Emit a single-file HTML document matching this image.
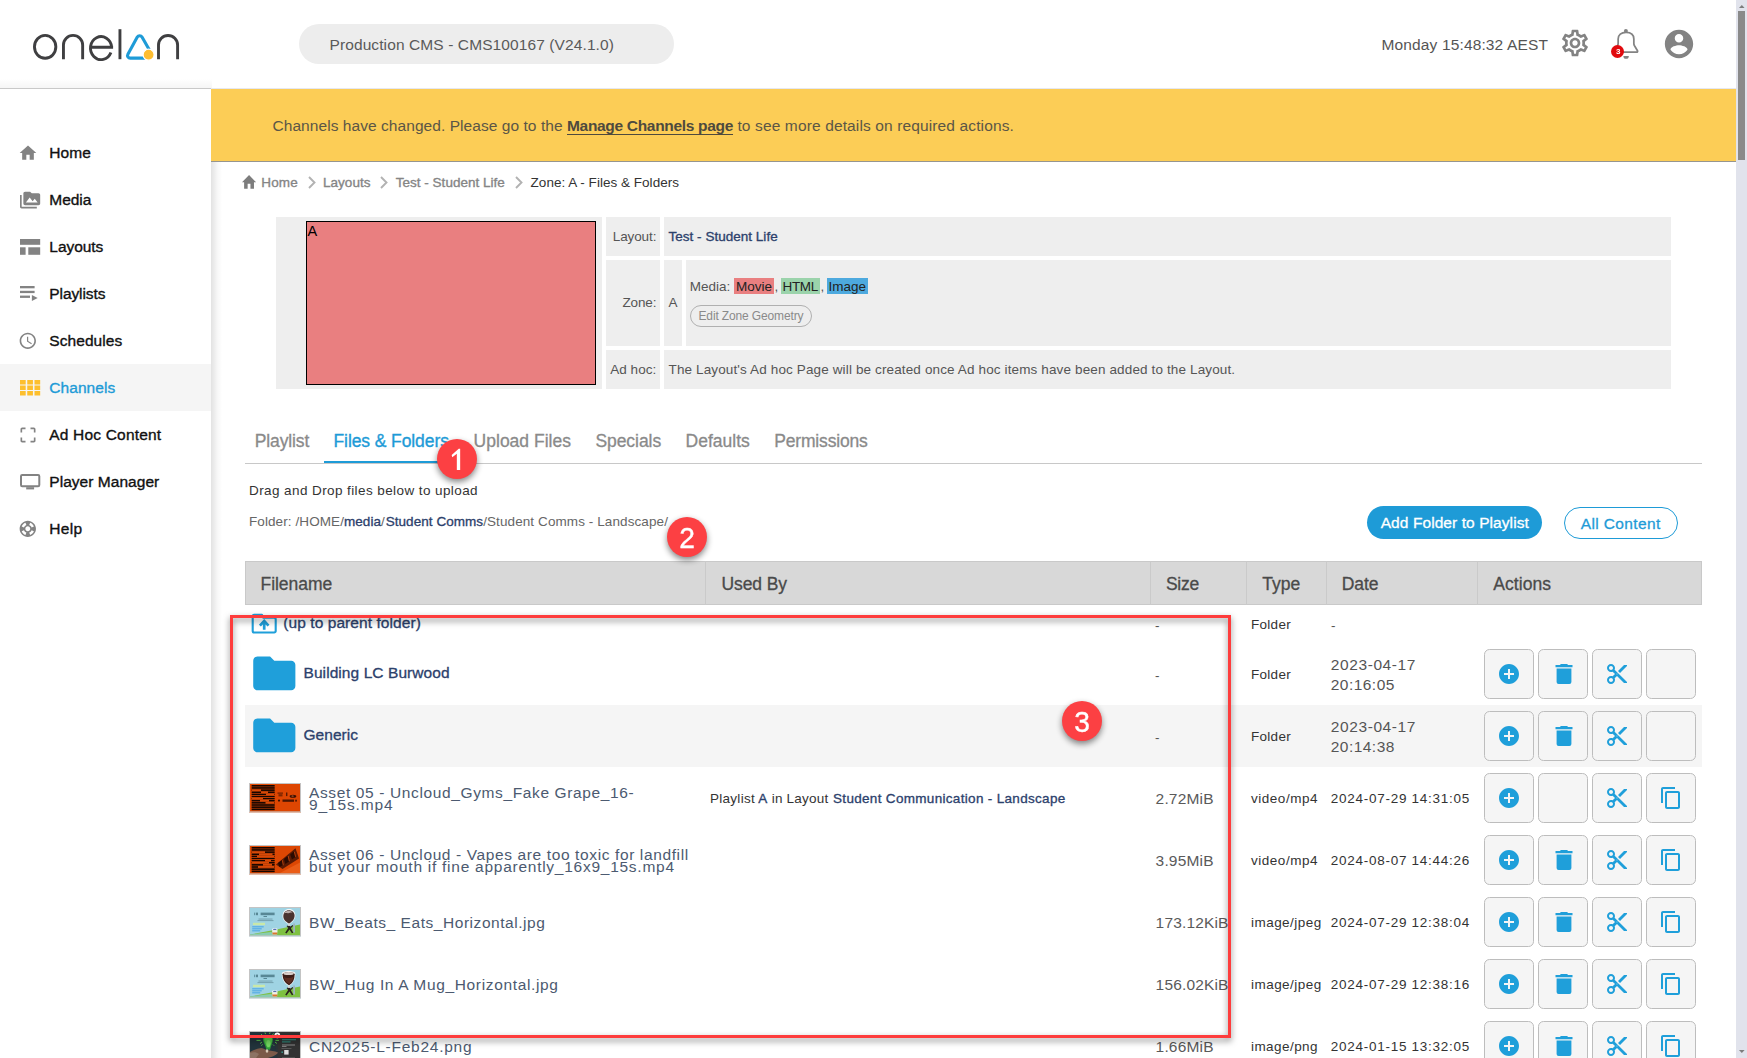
<!DOCTYPE html>
<html><head><meta charset="utf-8"><title>Zone A - Files &amp; Folders</title>
<style>

html,body{margin:0;padding:0;}
body{width:1747px;height:1058px;overflow:hidden;position:relative;background:#fff;font-family:"Liberation Sans",sans-serif;}
.t{position:absolute;white-space:nowrap;line-height:1;}
.b{position:absolute;box-sizing:border-box;}
.nv{color:#3b4a63;font-weight:700;}
svg{position:absolute;display:block;overflow:visible;}
.ab{position:absolute;box-sizing:border-box;width:50px;height:50px;background:#f5f5f5;border:1px solid #bdbdbd;border-radius:5.5px;}

</style></head><body>
<div class="b" style="left:211px;top:89px;width:1525px;height:73px;background:#fccd56;border-bottom:1px solid #96958f;"></div>
<div class="b" style="left:276px;top:217px;width:326px;height:172px;background:#eeeeee;"></div>
<div class="b" style="left:306px;top:221px;width:290px;height:164px;background:#e97f80;border:1px solid #000;"></div>
<div class="b" style="left:606px;top:217px;width:54px;height:39px;background:#eeeeee;"></div>
<div class="b" style="left:664px;top:217px;width:1007px;height:39px;background:#eeeeee;"></div>
<div class="b" style="left:606px;top:260px;width:54px;height:86px;background:#eeeeee;"></div>
<div class="b" style="left:664px;top:260px;width:18px;height:86px;background:#eeeeee;"></div>
<div class="b" style="left:686px;top:260px;width:985px;height:86px;background:#eeeeee;"></div>
<div class="b" style="left:606px;top:350px;width:54px;height:39px;background:#eeeeee;"></div>
<div class="b" style="left:664px;top:350px;width:1007px;height:39px;background:#eeeeee;"></div>
<div class="b" style="left:734px;top:278px;width:40px;height:16px;background:#e97f80;"></div>
<div class="b" style="left:781px;top:278px;width:39px;height:16px;background:#9bd3ab;"></div>
<div class="b" style="left:827px;top:278px;width:41px;height:16px;background:#4da9de;"></div>
<div class="b" style="left:690px;top:305px;width:122px;height:22px;border:1px solid #b0b0b0;border-radius:11px;"></div>
<div class="b" style="left:245px;top:463px;width:1457px;height:1px;background:#c8c8c8;"></div>
<div class="b" style="left:324px;top:461px;width:132px;height:2.3px;background:#1e9bd7;"></div>
<div class="b" style="left:1367px;top:506px;width:175px;height:33px;background:#1e9bd7;border-radius:17px;"></div>
<div class="b" style="left:1564px;top:507px;width:114px;height:32px;background:#fff;border:1px solid #1e9bd7;border-radius:16px;"></div>
<div class="b" style="left:245px;top:561px;width:1457px;height:44px;background:#d8d8d8;border:1px solid #c9c9c9;"></div>
<div class="b" style="left:705.3px;top:561px;width:1px;height:44px;background:#cacaca;"></div>
<div class="b" style="left:1150px;top:561px;width:1px;height:44px;background:#cacaca;"></div>
<div class="b" style="left:1246px;top:561px;width:1px;height:44px;background:#cacaca;"></div>
<div class="b" style="left:1326px;top:561px;width:1px;height:44px;background:#cacaca;"></div>
<div class="b" style="left:1477px;top:561px;width:1px;height:44px;background:#cacaca;"></div>
<div class="b" style="left:245px;top:705px;width:1457px;height:62px;background:#f5f5f5;"></div>
<div class="b" style="left:0px;top:0px;width:1736px;height:88px;background:#fff;"></div>
<div class="b" style="left:0px;top:79px;width:212px;height:9px;background:linear-gradient(to bottom,rgba(0,0,0,0),rgba(0,0,0,.04));"></div>
<div class="b" style="left:0px;top:88px;width:211px;height:1px;background:#c9c9c9;"></div>
<div class="b" style="left:211px;top:88px;width:1525px;height:1px;background:#e6e8f0;"></div>
<div class="b" style="left:299px;top:24px;width:375px;height:40px;background:#ededed;border-radius:20px;"></div>
<div class="b" style="left:0px;top:89px;width:211px;height:969px;background:#fff;"></div>
<div class="b" style="left:211px;top:162px;width:11px;height:896px;background:linear-gradient(to right,rgba(0,0,0,.115),rgba(0,0,0,.03) 60%,rgba(0,0,0,0));"></div>
<div class="b" style="left:0px;top:364px;width:211px;height:47px;background:#f5f5f5;"></div>
<div class="b" style="left:1736px;top:0px;width:11px;height:1058px;background:#e1e3ec;"></div>
<div class="b" style="left:1738px;top:11px;width:7px;height:149px;background:#8a8a8a;"></div>
<svg style="left:1738.7px;top:5.3px" width="5.6" height="3" viewBox="0 0 5.6 3"><path fill="#7d7d7d" d="M2.8 0L5.6 3H0z"/></svg>
<svg style="left:1738.7px;top:1050px" width="5.6" height="3" viewBox="0 0 5.6 3"><path fill="#7d7d7d" d="M2.8 3L5.600 0H0z"/></svg>
<svg style="left:18.07px;top:142.6px" width="20" height="20" viewBox="0 0 24 24" ><path fill="#838383" d="M10 20v-6h4v6h5v-8h3L12 3 2 12h3v8z"/></svg>
<svg style="left:19.75px;top:189.7px" width="20.2" height="20.2" viewBox="0 0 24 24" ><path fill="#838383" d="M2 6H0v5h.01L0 20c0 1.1.9 2 2 2h18v-2H2V6zm20-2h-8l-2-2H6c-1.1 0-1.99.9-1.99 2L4 16c0 1.1.9 2 2 2h16c1.1 0 2-.9 2-2V6c0-1.1-.9-2-2-2zM7 15l4.5-6 3.5 4.51 2.5-3.01L21 15H7z"/></svg>
<svg style="left:19.75px;top:238.9px" width="20.2" height="15.8" viewBox="0 0 20.2 15.8"><rect x="0" y="0" width="20.2" height="5.8" fill="#838383"/><rect x="0" y="8.3" width="5.6" height="7.5" fill="#838383"/><rect x="8.3" y="8.3" width="11.9" height="7.5" fill="#838383"/></svg>
<svg style="left:19.75px;top:285.7px" width="18" height="15" viewBox="0 0 18 15"><rect x="0" y="0" width="14.6" height="2.3" fill="#838383"/><rect x="0" y="4.8" width="14.6" height="2.3" fill="#838383"/><rect x="0" y="9.6" width="10" height="2.3" fill="#838383"/><path d="M11.9 8.9L17.7 11.9L11.9 14.9z" fill="#838383"/></svg>
<svg style="left:18.4px;top:330.8px" width="19.6" height="19.6" viewBox="0 0 24 24" ><path fill="#838383" d="M11.99 2C6.47 2 2 6.48 2 12s4.47 10 9.99 10C17.52 22 22 17.52 22 12S17.52 2 11.99 2zM12 20c-4.42 0-8-3.58-8-8s3.58-8 8-8 8 3.58 8 8-3.58 8-8 8zm.5-13H11v6l5.25 3.15.75-1.23-4.5-2.67z"/></svg>
<svg style="left:19.97px;top:380.1px" width="20.2" height="15.5" viewBox="0 0 20.2 15.5"><rect x="0.0" y="0.0" width="5.7" height="4.5" fill="#fdbf2d"/><rect x="7.25" y="0.0" width="5.7" height="4.5" fill="#fdbf2d"/><rect x="14.5" y="0.0" width="5.7" height="4.5" fill="#fdbf2d"/><rect x="0.0" y="5.5" width="5.7" height="4.5" fill="#fdbf2d"/><rect x="7.25" y="5.5" width="5.7" height="4.5" fill="#fdbf2d"/><rect x="14.5" y="5.5" width="5.7" height="4.5" fill="#fdbf2d"/><rect x="0.0" y="11.0" width="5.7" height="4.5" fill="#fdbf2d"/><rect x="7.25" y="11.0" width="5.7" height="4.5" fill="#fdbf2d"/><rect x="14.5" y="11.0" width="5.7" height="4.5" fill="#fdbf2d"/></svg>
<svg style="left:17.9px;top:425.1px" width="20" height="20" viewBox="0 0 24 24" ><path fill="#838383" d="M3 5v4h2V5h4V3H5c-1.1 0-2 .9-2 2zm2 10H3v4c0 1.1.9 2 2 2h4v-2H5v-4zm14 4h-4v2h4c1.1 0 2-.9 2-2v-4h-2v4zm0-16h-4v2h4v4h2V5c0-1.1-.9-2-2-2z"/></svg>
<svg style="left:19.97px;top:474.3px" width="20.3" height="15.5" viewBox="0 0 20.3 15.5"><rect x="1" y="1" width="18.3" height="11.2" rx="1.2" fill="none" stroke="#838383" stroke-width="2"/><rect x="6.2" y="13.2" width="7.9" height="2.2" fill="#838383"/></svg>
<svg style="left:18.1px;top:518.9px" width="19.6" height="19.6" viewBox="0 0 24 24" ><path fill="#838383" d="M12 2C6.48 2 2 6.48 2 12s4.48 10 10 10 10-4.48 10-10S17.52 2 12 2zm7.46 7.12l-2.78 1.15c-.51-1.36-1.58-2.44-2.95-2.94l1.15-2.78c2.1.8 3.77 2.47 4.58 4.57zM12 15c-1.66 0-3-1.34-3-3s1.34-3 3-3 3 1.34 3 3-1.34 3-3 3zM9.13 4.54l1.17 2.78c-1.38.5-2.47 1.59-2.98 2.97L4.54 9.13c.81-2.11 2.48-3.78 4.59-4.59zM4.54 14.87l2.78-1.15c.51 1.38 1.59 2.46 2.97 2.96l-1.17 2.78c-2.1-.81-3.77-2.48-4.58-4.59zm10.34 4.59l-1.15-2.78c1.37-.51 2.45-1.59 2.95-2.97l2.78 1.17c-.81 2.1-2.48 3.77-4.58 4.58z"/></svg>
<svg style="left:1559.05px;top:26.8px" width="32" height="32" viewBox="0 0 24 24" ><path fill="#838383" d="M19.43 12.98c.04-.32.07-.64.07-.98 0-.34-.03-.66-.07-.98l2.11-1.65c.19-.15.24-.42.12-.64l-2-3.46c-.09-.16-.26-.25-.44-.25-.06 0-.12.01-.17.03l-2.49 1c-.52-.4-1.08-.73-1.69-.98l-.38-2.65C14.46 2.18 14.25 2 14 2h-4c-.25 0-.46.18-.49.42l-.38 2.65c-.61.25-1.17.59-1.69.98l-2.49-1c-.06-.02-.12-.03-.18-.03-.17 0-.34.09-.43.25l-2 3.46c-.13.22-.07.49.12.64l2.11 1.65c-.04.32-.07.65-.07.98 0 .33.03.66.07.98l-2.11 1.65c-.19.15-.24.42-.12.64l2 3.46c.09.16.26.25.44.25.06 0 .12-.01.17-.03l2.49-1c.52.4 1.08.73 1.69.98l.38 2.65c.03.24.24.42.49.42h4c.25 0 .46-.18.49-.42l.38-2.65c.61-.25 1.17-.59 1.69-.98l2.49 1c.06.02.12.03.18.03.17 0 .34-.09.43-.25l2-3.46c.12-.22.07-.49-.12-.64l-2.11-1.65zm-1.98-1.71c.04.31.05.52.05.73 0 .21-.02.43-.05.73l-.14 1.13.89.7 1.08.84-.7 1.21-1.27-.51-1.04-.42-.9.68c-.43.32-.84.56-1.25.73l-1.06.43-.16 1.13-.2 1.35h-1.4l-.19-1.35-.16-1.13-1.06-.43c-.43-.18-.83-.41-1.23-.71l-.91-.7-1.06.43-1.27.51-.7-1.21 1.08-.84.89-.7-.14-1.13c-.03-.31-.05-.54-.05-.74s.02-.43.05-.73l.14-1.13-.89-.7-1.08-.84.7-1.21 1.27.51 1.04.42.9-.68c.43-.32.84-.56 1.25-.73l1.06-.43.16-1.13.2-1.35h1.39l.19 1.35.16 1.13 1.06.43c.43.18.83.41 1.23.71l.91.7 1.06-.43 1.27-.51.7 1.21-1.07.85-.89.7.14 1.13zM12 8c-2.21 0-4 1.79-4 4s1.79 4 4 4 4-1.79 4-4-1.79-4-4-4zm0 6c-1.1 0-2-.9-2-2s.9-2 2-2 2 .9 2 2-.9 2-2 2z"/></svg>
<svg style="left:1662.1px;top:26.5px" width="34" height="34" viewBox="0 0 24 24" ><path fill="#838383" d="M12 2C6.48 2 2 6.48 2 12s4.48 10 10 10 10-4.48 10-10S17.52 2 12 2zm0 3c1.66 0 3 1.34 3 3s-1.34 3-3 3-3-1.34-3-3 1.34-3 3-3zm0 14.2c-2.5 0-4.71-1.28-6-3.22.03-1.99 4-3.08 6-3.08 1.99 0 5.97 1.09 6 3.08-1.29 1.94-3.5 3.22-6 3.22z"/></svg>
<svg style="left:1600px;top:20px" width="50" height="44" viewBox="0 0 50 44"><path d="M18.15 19 C18.15 14.8 21.2 12.25 26 12.25 C30.8 12.25 33.85 14.8 33.85 19 V23.6 c0 .8 .15 1.2 .5 1.9 L37.5 30.7 a1 1 0 0 1 -.9 1.5 H15.4 a1 1 0 0 1 -.9 -1.5 L17.65 25.5 c.35 -.7 .5 -1.1 .5 -1.9 Z" fill="none" stroke="#838383" stroke-width="1.75" stroke-linejoin="round"/><circle cx="25.9" cy="11.1" r="2" fill="#838383"/><path d="M23.4 35.9 h5.4 a2.7 2.9 0 0 1 -5.4 0z" fill="#838383"/></svg>
<div class="b" style="left:1611.3px;top:45px;width:13.2px;height:13.2px;background:#e10a0e;border-radius:50%;"></div>
<svg style="left:241.7px;top:175.2px" width="14.1" height="13.7" viewBox="2 3 20 17" preserveAspectRatio="none"><path fill="#7d7d7d" d="M10 20v-6h4v6h5v-8h3L12 3 2 12h3v8z"/></svg>
<svg style="left:307.5px;top:176px" width="8" height="13" viewBox="0 0 8 13"><path d="M1 1l5.5 5.5L1 12" fill="none" stroke="#b2b2b2" stroke-width="1.9"/></svg>
<svg style="left:380px;top:176px" width="8" height="13" viewBox="0 0 8 13"><path d="M1 1l5.5 5.5L1 12" fill="none" stroke="#b2b2b2" stroke-width="1.9"/></svg>
<svg style="left:515px;top:176px" width="8" height="13" viewBox="0 0 8 13"><path d="M1 1l5.5 5.5L1 12" fill="none" stroke="#b2b2b2" stroke-width="1.9"/></svg>
<div class="ab" style="left:1484px;top:649px"></div>
<svg style="left:1497.1px;top:662px" width="24" height="24" viewBox="0 0 24 24" ><path fill="#1f9fda" d="M12 2C6.48 2 2 6.48 2 12s4.48 10 10 10 10-4.48 10-10S17.52 2 12 2zm5 11h-4v4h-2v-4H7v-2h4V7h2v4h4v2z"/></svg>
<div class="ab" style="left:1538px;top:649px"></div>
<svg style="left:1563.8px;top:674px" width="1" height="1" viewBox="0 0 1 1"><path d="M-3.6 -10h7.2v1.2h-7.2zM-8.5 -9h17v2.300h-17zM-7.400 -5.500h14.800v13.500a2 2 0 0 1 -2 2h-10.800a2 2 0 0 1 -2 -2z" fill="#1f9fda"/></svg>
<div class="ab" style="left:1592px;top:649px"></div>
<svg style="left:1605.1px;top:662px" width="24" height="24" viewBox="0 0 24 24" ><path fill="#1f9fda" d="M9.64 7.64c.23-.5.36-1.05.36-1.64 0-2.21-1.79-4-4-4S2 3.79 2 6s1.79 4 4 4c.59 0 1.14-.13 1.64-.36L10 12l-2.36 2.36C7.14 14.13 6.59 14 6 14c-2.21 0-4 1.79-4 4s1.79 4 4 4 4-1.79 4-4c0-.59-.13-1.14-.36-1.64L12 14l7 7h3v-1L9.64 7.64zM6 8c-1.1 0-2-.89-2-2s.9-2 2-2 2 .89 2 2-.9 2-2 2zm0 12c-1.1 0-2-.89-2-2s.9-2 2-2 2 .89 2 2-.9 2-2 2zm6-7.5c-.28 0-.5-.22-.5-.5s.22-.5.5-.5.5.22.5.5-.22.5-.5.5zM19 3l-6 6 2 2 7-7V3z"/></svg>
<div class="ab" style="left:1646px;top:649px"></div>
<div class="ab" style="left:1484px;top:711px"></div>
<svg style="left:1497.1px;top:724px" width="24" height="24" viewBox="0 0 24 24" ><path fill="#1f9fda" d="M12 2C6.48 2 2 6.48 2 12s4.48 10 10 10 10-4.48 10-10S17.52 2 12 2zm5 11h-4v4h-2v-4H7v-2h4V7h2v4h4v2z"/></svg>
<div class="ab" style="left:1538px;top:711px"></div>
<svg style="left:1563.8px;top:736px" width="1" height="1" viewBox="0 0 1 1"><path d="M-3.6 -10h7.2v1.2h-7.2zM-8.5 -9h17v2.300h-17zM-7.400 -5.500h14.800v13.500a2 2 0 0 1 -2 2h-10.800a2 2 0 0 1 -2 -2z" fill="#1f9fda"/></svg>
<div class="ab" style="left:1592px;top:711px"></div>
<svg style="left:1605.1px;top:724px" width="24" height="24" viewBox="0 0 24 24" ><path fill="#1f9fda" d="M9.64 7.64c.23-.5.36-1.05.36-1.64 0-2.21-1.79-4-4-4S2 3.79 2 6s1.79 4 4 4c.59 0 1.14-.13 1.64-.36L10 12l-2.36 2.36C7.14 14.13 6.59 14 6 14c-2.21 0-4 1.79-4 4s1.79 4 4 4 4-1.79 4-4c0-.59-.13-1.14-.36-1.64L12 14l7 7h3v-1L9.64 7.64zM6 8c-1.1 0-2-.89-2-2s.9-2 2-2 2 .89 2 2-.9 2-2 2zm0 12c-1.1 0-2-.89-2-2s.9-2 2-2 2 .89 2 2-.9 2-2 2zm6-7.5c-.28 0-.5-.22-.5-.5s.22-.5.5-.5.5.22.5.5-.22.5-.5.5zM19 3l-6 6 2 2 7-7V3z"/></svg>
<div class="ab" style="left:1646px;top:711px"></div>
<div class="ab" style="left:1484px;top:773px"></div>
<svg style="left:1497.1px;top:786px" width="24" height="24" viewBox="0 0 24 24" ><path fill="#1f9fda" d="M12 2C6.48 2 2 6.48 2 12s4.48 10 10 10 10-4.48 10-10S17.52 2 12 2zm5 11h-4v4h-2v-4H7v-2h4V7h2v4h4v2z"/></svg>
<div class="ab" style="left:1538px;top:773px"></div>
<div class="ab" style="left:1592px;top:773px"></div>
<svg style="left:1605.1px;top:786px" width="24" height="24" viewBox="0 0 24 24" ><path fill="#1f9fda" d="M9.64 7.64c.23-.5.36-1.05.36-1.64 0-2.21-1.79-4-4-4S2 3.79 2 6s1.79 4 4 4c.59 0 1.14-.13 1.64-.36L10 12l-2.36 2.36C7.14 14.13 6.59 14 6 14c-2.21 0-4 1.79-4 4s1.79 4 4 4 4-1.79 4-4c0-.59-.13-1.14-.36-1.64L12 14l7 7h3v-1L9.64 7.64zM6 8c-1.1 0-2-.89-2-2s.9-2 2-2 2 .89 2 2-.9 2-2 2zm0 12c-1.1 0-2-.89-2-2s.9-2 2-2 2 .89 2 2-.9 2-2 2zm6-7.5c-.28 0-.5-.22-.5-.5s.22-.5.5-.5.5.22.5.5-.22.5-.5.5zM19 3l-6 6 2 2 7-7V3z"/></svg>
<div class="ab" style="left:1646px;top:773px"></div>
<svg style="left:1659.1px;top:786px" width="24" height="24" viewBox="0 0 24 24" ><path fill="#1f9fda" d="M16 1H4c-1.1 0-2 .9-2 2v14h2V3h12V1zm3 4H8c-1.1 0-2 .9-2 2v14c0 1.1.9 2 2 2h11c1.1 0 2-.9 2-2V7c0-1.1-.9-2-2-2zm0 16H8V7h11v14z"/></svg>
<div class="ab" style="left:1484px;top:835px"></div>
<svg style="left:1497.1px;top:848px" width="24" height="24" viewBox="0 0 24 24" ><path fill="#1f9fda" d="M12 2C6.48 2 2 6.48 2 12s4.48 10 10 10 10-4.48 10-10S17.52 2 12 2zm5 11h-4v4h-2v-4H7v-2h4V7h2v4h4v2z"/></svg>
<div class="ab" style="left:1538px;top:835px"></div>
<svg style="left:1563.8px;top:860px" width="1" height="1" viewBox="0 0 1 1"><path d="M-3.6 -10h7.2v1.2h-7.2zM-8.5 -9h17v2.300h-17zM-7.400 -5.500h14.800v13.500a2 2 0 0 1 -2 2h-10.800a2 2 0 0 1 -2 -2z" fill="#1f9fda"/></svg>
<div class="ab" style="left:1592px;top:835px"></div>
<svg style="left:1605.1px;top:848px" width="24" height="24" viewBox="0 0 24 24" ><path fill="#1f9fda" d="M9.64 7.64c.23-.5.36-1.05.36-1.64 0-2.21-1.79-4-4-4S2 3.79 2 6s1.79 4 4 4c.59 0 1.14-.13 1.64-.36L10 12l-2.36 2.36C7.14 14.13 6.59 14 6 14c-2.21 0-4 1.79-4 4s1.79 4 4 4 4-1.79 4-4c0-.59-.13-1.14-.36-1.64L12 14l7 7h3v-1L9.64 7.64zM6 8c-1.1 0-2-.89-2-2s.9-2 2-2 2 .89 2 2-.9 2-2 2zm0 12c-1.1 0-2-.89-2-2s.9-2 2-2 2 .89 2 2-.9 2-2 2zm6-7.5c-.28 0-.5-.22-.5-.5s.22-.5.5-.5.5.22.5.5-.22.5-.5.5zM19 3l-6 6 2 2 7-7V3z"/></svg>
<div class="ab" style="left:1646px;top:835px"></div>
<svg style="left:1659.1px;top:848px" width="24" height="24" viewBox="0 0 24 24" ><path fill="#1f9fda" d="M16 1H4c-1.1 0-2 .9-2 2v14h2V3h12V1zm3 4H8c-1.1 0-2 .9-2 2v14c0 1.1.9 2 2 2h11c1.1 0 2-.9 2-2V7c0-1.1-.9-2-2-2zm0 16H8V7h11v14z"/></svg>
<div class="ab" style="left:1484px;top:897px"></div>
<svg style="left:1497.1px;top:910px" width="24" height="24" viewBox="0 0 24 24" ><path fill="#1f9fda" d="M12 2C6.48 2 2 6.48 2 12s4.48 10 10 10 10-4.48 10-10S17.52 2 12 2zm5 11h-4v4h-2v-4H7v-2h4V7h2v4h4v2z"/></svg>
<div class="ab" style="left:1538px;top:897px"></div>
<svg style="left:1563.8px;top:922px" width="1" height="1" viewBox="0 0 1 1"><path d="M-3.6 -10h7.2v1.2h-7.2zM-8.5 -9h17v2.300h-17zM-7.400 -5.500h14.800v13.500a2 2 0 0 1 -2 2h-10.800a2 2 0 0 1 -2 -2z" fill="#1f9fda"/></svg>
<div class="ab" style="left:1592px;top:897px"></div>
<svg style="left:1605.1px;top:910px" width="24" height="24" viewBox="0 0 24 24" ><path fill="#1f9fda" d="M9.64 7.64c.23-.5.36-1.05.36-1.64 0-2.21-1.79-4-4-4S2 3.79 2 6s1.79 4 4 4c.59 0 1.14-.13 1.64-.36L10 12l-2.36 2.36C7.14 14.13 6.59 14 6 14c-2.21 0-4 1.79-4 4s1.79 4 4 4 4-1.79 4-4c0-.59-.13-1.14-.36-1.64L12 14l7 7h3v-1L9.64 7.64zM6 8c-1.1 0-2-.89-2-2s.9-2 2-2 2 .89 2 2-.9 2-2 2zm0 12c-1.1 0-2-.89-2-2s.9-2 2-2 2 .89 2 2-.9 2-2 2zm6-7.5c-.28 0-.5-.22-.5-.5s.22-.5.5-.5.5.22.5.5-.22.5-.5.5zM19 3l-6 6 2 2 7-7V3z"/></svg>
<div class="ab" style="left:1646px;top:897px"></div>
<svg style="left:1659.1px;top:910px" width="24" height="24" viewBox="0 0 24 24" ><path fill="#1f9fda" d="M16 1H4c-1.1 0-2 .9-2 2v14h2V3h12V1zm3 4H8c-1.1 0-2 .9-2 2v14c0 1.1.9 2 2 2h11c1.1 0 2-.9 2-2V7c0-1.1-.9-2-2-2zm0 16H8V7h11v14z"/></svg>
<div class="ab" style="left:1484px;top:959px"></div>
<svg style="left:1497.1px;top:972px" width="24" height="24" viewBox="0 0 24 24" ><path fill="#1f9fda" d="M12 2C6.48 2 2 6.48 2 12s4.48 10 10 10 10-4.48 10-10S17.52 2 12 2zm5 11h-4v4h-2v-4H7v-2h4V7h2v4h4v2z"/></svg>
<div class="ab" style="left:1538px;top:959px"></div>
<svg style="left:1563.8px;top:984px" width="1" height="1" viewBox="0 0 1 1"><path d="M-3.6 -10h7.2v1.2h-7.2zM-8.5 -9h17v2.300h-17zM-7.400 -5.500h14.800v13.500a2 2 0 0 1 -2 2h-10.800a2 2 0 0 1 -2 -2z" fill="#1f9fda"/></svg>
<div class="ab" style="left:1592px;top:959px"></div>
<svg style="left:1605.1px;top:972px" width="24" height="24" viewBox="0 0 24 24" ><path fill="#1f9fda" d="M9.64 7.64c.23-.5.36-1.05.36-1.64 0-2.21-1.79-4-4-4S2 3.79 2 6s1.79 4 4 4c.59 0 1.14-.13 1.64-.36L10 12l-2.36 2.36C7.14 14.13 6.59 14 6 14c-2.21 0-4 1.79-4 4s1.79 4 4 4 4-1.79 4-4c0-.59-.13-1.14-.36-1.64L12 14l7 7h3v-1L9.64 7.64zM6 8c-1.1 0-2-.89-2-2s.9-2 2-2 2 .89 2 2-.9 2-2 2zm0 12c-1.1 0-2-.89-2-2s.9-2 2-2 2 .89 2 2-.9 2-2 2zm6-7.5c-.28 0-.5-.22-.5-.5s.22-.5.5-.5.5.22.5.5-.22.5-.5.5zM19 3l-6 6 2 2 7-7V3z"/></svg>
<div class="ab" style="left:1646px;top:959px"></div>
<svg style="left:1659.1px;top:972px" width="24" height="24" viewBox="0 0 24 24" ><path fill="#1f9fda" d="M16 1H4c-1.1 0-2 .9-2 2v14h2V3h12V1zm3 4H8c-1.1 0-2 .9-2 2v14c0 1.1.9 2 2 2h11c1.1 0 2-.9 2-2V7c0-1.1-.9-2-2-2zm0 16H8V7h11v14z"/></svg>
<div class="ab" style="left:1484px;top:1021px"></div>
<svg style="left:1497.1px;top:1034px" width="24" height="24" viewBox="0 0 24 24" ><path fill="#1f9fda" d="M12 2C6.48 2 2 6.48 2 12s4.48 10 10 10 10-4.48 10-10S17.52 2 12 2zm5 11h-4v4h-2v-4H7v-2h4V7h2v4h4v2z"/></svg>
<div class="ab" style="left:1538px;top:1021px"></div>
<svg style="left:1563.8px;top:1046px" width="1" height="1" viewBox="0 0 1 1"><path d="M-3.6 -10h7.2v1.2h-7.2zM-8.5 -9h17v2.300h-17zM-7.400 -5.500h14.800v13.500a2 2 0 0 1 -2 2h-10.800a2 2 0 0 1 -2 -2z" fill="#1f9fda"/></svg>
<div class="ab" style="left:1592px;top:1021px"></div>
<svg style="left:1605.1px;top:1034px" width="24" height="24" viewBox="0 0 24 24" ><path fill="#1f9fda" d="M9.64 7.64c.23-.5.36-1.05.36-1.64 0-2.21-1.79-4-4-4S2 3.79 2 6s1.79 4 4 4c.59 0 1.14-.13 1.64-.36L10 12l-2.36 2.36C7.14 14.13 6.59 14 6 14c-2.21 0-4 1.79-4 4s1.79 4 4 4 4-1.79 4-4c0-.59-.13-1.14-.36-1.64L12 14l7 7h3v-1L9.64 7.64zM6 8c-1.1 0-2-.89-2-2s.9-2 2-2 2 .89 2 2-.9 2-2 2zm0 12c-1.1 0-2-.89-2-2s.9-2 2-2 2 .89 2 2-.9 2-2 2zm6-7.5c-.28 0-.5-.22-.5-.5s.22-.5.5-.5.5.22.5.5-.22.5-.5.5zM19 3l-6 6 2 2 7-7V3z"/></svg>
<div class="ab" style="left:1646px;top:1021px"></div>
<svg style="left:1659.1px;top:1034px" width="24" height="24" viewBox="0 0 24 24" ><path fill="#1f9fda" d="M16 1H4c-1.1 0-2 .9-2 2v14h2V3h12V1zm3 4H8c-1.1 0-2 .9-2 2v14c0 1.1.9 2 2 2h11c1.1 0 2-.9 2-2V7c0-1.1-.9-2-2-2zm0 16H8V7h11v14z"/></svg>
<svg style="left:248.6px;top:648.2px" width="50.6" height="50.6" viewBox="0 0 24 24" ><path fill="#1f9fda" d="M10 4H4c-1.1 0-1.99.9-1.99 2L2 18c0 1.1.9 2 2 2h16c1.1 0 2-.9 2-2V8c0-1.1-.9-2-2-2h-8l-2-2z"/></svg>
<svg style="left:248.6px;top:710.2px" width="50.6" height="50.6" viewBox="0 0 24 24" ><path fill="#1f9fda" d="M10 4H4c-1.1 0-1.99.9-1.99 2L2 18c0 1.1.9 2 2 2h16c1.1 0 2-.9 2-2V8c0-1.1-.9-2-2-2h-8l-2-2z"/></svg>
<svg style="left:250px;top:612px" width="28" height="23" viewBox="0 0 28 23"><path d="M4.2 20.55 h20 a1.5 1.5 0 0 0 1.5 -1.5 v-11.9 a1.5 1.5 0 0 0 -1.5 -1.5 h-11 l-1.3 -2.9 h-7.7 a1.5 1.5 0 0 0 -1.5 1.5 v14.8 a1.5 1.5 0 0 0 1.5 1.5z" fill="#fff" stroke="#1f9fda" stroke-width="2.1" stroke-linejoin="round"/><path d="M14.2 17.8v-8.6M9.9 13.6l4.3-4.6 4.3 4.6" fill="none" stroke="#1f9fda" stroke-width="2.7"/></svg>
<svg style="left:249.1px;top:783.2px" width="52" height="29.4" viewBox="0 0 52 29.4"><defs><pattern id="stp" width="52" height="2.13" patternUnits="userSpaceOnUse"><rect width="52" height="1.55" fill="#170600"/><rect y="1.55" width="52" height="0.58" fill="#c23c02"/></pattern></defs><rect width="52" height="29.4" fill="#e64b03"/><rect x="26" y="1" width="25" height="27.4" fill="#de4602"/><rect x="2.6" y="2" width="23.1" height="25.6" fill="url(#stp)"/><g fill="#d94a08"><rect x="3" y="6.2" width="9" height="1.9"/><rect x="12" y="8.3" width="7" height="1.9"/><rect x="17" y="10.4" width="8.3" height="1.9"/><rect x="3" y="14.7" width="11" height="1.9"/><rect x="11" y="16.8" width="9" height="1.9"/><rect x="16.5" y="18.9" width="8.8" height="1.9"/></g><g fill="#5a1a02"><rect x="28.5" y="9.6" width="5.5" height="1"/><rect x="29.5" y="11.2" width="4" height="2.2" opacity=".7"/><rect x="37" y="9.5" width="1.4" height="3.6"/><ellipse cx="44" cy="13.2" rx="3.3" ry="1.5" fill="#3a1002"/><ellipse cx="43.6" cy="13" rx="1.2" ry=".6" fill="#e2703a"/><circle cx="30" cy="17.6" r="1.1" fill="#3a1002"/><rect x="33.5" y="16.5" width="11.5" height="2.3" fill="#4a1502"/><rect x="46.3" y="16.7" width="1.5" height="1.9" fill="#3a1002"/></g><rect x="0.5" y="0.5" width="51" height="28.4" fill="none" stroke="#c4c4c4" stroke-width="1"/></svg>
<svg style="left:249.1px;top:845.2px" width="52" height="29.4" viewBox="0 0 52 29.4"><rect width="52" height="29.4" fill="#e64b03"/><path d="M26 1h25v27.4h-25z" fill="#dc4703"/><path d="M51 17.5v10.9H30z" fill="#ea5d17"/><path d="M27 19.5L46.5 3.2 50 13.5 33.5 24z" fill="#5a1a03"/><path d="M29 18l4-3 1 5-3.4 2zM35 14l3.6-3 1.4 5.6-3.6 2.4zM41.2 9.6l3.6-3 1.6 5.4-3.4 2.6z" fill="#2a0a01"/><path d="M33.3 15.2l1 5M39.2 11l1.2 5.2M45.4 6.8l1.2 5" stroke="#c8470c" stroke-width=".8"/><rect x="2.6" y="2" width="23.1" height="25.6" fill="url(#stp)"/><g fill="#d94a08"><rect x="3" y="6.2" width="13" height="1.9"/><rect x="10" y="8.3" width="13.5" height="1.9"/><rect x="8" y="10.4" width="17.3" height="1.9"/><rect x="16" y="14.7" width="6" height="1.9"/><rect x="3" y="16.8" width="17" height="1.9"/><rect x="14" y="18.9" width="9" height="1.9"/><rect x="9" y="21" width="16.3" height="1.9"/></g><rect x="0.5" y="0.5" width="51" height="28.4" fill="none" stroke="#c4c4c4" stroke-width="1"/></svg>
<svg style="left:249.1px;top:907.2px" width="52" height="29.4" viewBox="0 0 52 29.4"><rect width="52" height="29.4" fill="#9fd3e3"/><path d="M1 28.400V27.600L25 23 51 17.500v10.900z" fill="#7ec142"/><path d="M1 28.400v-1L22 25l8 3.400z" fill="#8fd0df" opacity=".7"/><g fill="#3d6b78" opacity=".72"><rect x="5.200" y="5.600" width="1" height="2.600"/><rect x="7" y="5.600" width="2" height="2.600"/><rect x="11.600" y="5.600" width="14" height="2.600"/><rect x="14.500" y="9" width="3.500" height="1" /></g><g fill="#6f9aa8"><rect x="9.500" y="11.600" width="14" height=".9"/><rect x="8.500" y="13.200" width="16" height=".9"/></g><rect x="4" y="15.800" width="12" height="2.300" fill="#c9e8a8"/><g fill="#62b3e6"><rect x="3.200" y="19" width="11.500" height="1.500"/><rect x="3.200" y="21" width="9.500" height="1.500"/><rect x="3.200" y="23" width="8" height="1.500"/></g><rect x="44.200" y="16.500" width="1.800" height="9" fill="#9fb4bd"/><path d="M33.5 9c0-4.5 3-7 6.6-7s6.3 2.600 6.300 6.500c0 4.200-3.600 7.200-6.300 8.800c-3.200-1.600-6.600-4.300-6.600-8.300z" fill="#f4f6f7"/><path d="M34.300 9.200c0-3.800 2.500-6 5.600-6s5.700 2.100 5.700 5.500c0 3.700-3 6.200-5.600 7.800c-2.800-1.500-5.700-3.800-5.700-7.300z" fill="#4a332f"/><path d="M35 6.500c1-2 3-3 5-2.800s3 1 3.500 2c-1.500-.5-3 .8-4.500.6s-2.500-.6-4 .2z" fill="#b9aaa6"/><path d="M39.500 17.200l1 0 .8 2.500 2.200-1.800 .7 .8-2.300 2.500 2.400 4.500-1.400 .6-2.400-3.800-3 4-1.300-.8 3-4.600-1.700-2.200 1.500-.400z" fill="#2b2420"/><circle cx="40" cy="18" r="1.100" fill="#f1f1f1"/><ellipse cx="25.800" cy="22.600" rx="2.900" ry="1.400" fill="#eef3f5"/><ellipse cx="25.800" cy="22.500" rx="1.800" ry=".8" fill="#5b6fb0"/><path d="M23 23.200h5.600l-.6 4.200h-4.400z" fill="#f0efe9"/><path d="M23.300 25.500h5l-.3 2h-4.400z" fill="#d9772e"/><rect x="0.5" y="0.5" width="51" height="28.4" fill="none" stroke="#c4c4c4" stroke-width="1"/></svg>
<svg style="left:249.1px;top:969.2px" width="52" height="29.4" viewBox="0 0 52 29.4"><rect width="52" height="29.4" fill="#9fd3e3"/><path d="M1 28.400V27.600L25 23 51 17.500v10.900z" fill="#7ec142"/><path d="M1 28.400v-1L22 25l8 3.400z" fill="#8fd0df" opacity=".7"/><g fill="#3d6b78" opacity=".72"><rect x="5.200" y="5.600" width="1" height="2.600"/><rect x="7" y="5.600" width="2" height="2.600"/><rect x="11.600" y="5.600" width="14" height="2.600"/><rect x="14.500" y="9" width="3.500" height="1" /></g><g fill="#6f9aa8"><rect x="9.500" y="11.600" width="14" height=".9"/><rect x="8.500" y="13.200" width="16" height=".9"/></g><rect x="4" y="15.800" width="12" height="2.300" fill="#c9e8a8"/><g fill="#62b3e6"><rect x="3.200" y="19" width="11.500" height="1.500"/><rect x="3.200" y="21" width="9.500" height="1.500"/><rect x="3.200" y="23" width="8" height="1.500"/></g><rect x="44.200" y="16.500" width="1.800" height="9" fill="#9fb4bd"/><path d="M32.800 4.500c0-1.600 3-2.600 7-2.600s6.600 1 6.600 2.600c0 5.500-1.600 9.800-6.400 12.500c-5-2.500-7.200-7-7.200-12.500z" fill="#f4f6f7"/><path d="M33.600 5.200c0-1 2.600-2 6.200-2s5.800.9 5.800 2c0 5-1.500 8.600-5.600 11c-4.300-2.200-6.400-6-6.400-11z" fill="#3b1d17"/><ellipse cx="39.600" cy="4.600" rx="5.200" ry="1.500" fill="#d8cdc8"/><path d="M35 8c2 1.500 7 1.500 9.500-.5c-.3 3-1.700 5.700-4.400 7.400c-3-1.600-4.600-4-5.100-6.900z" fill="#6a3326" opacity=".8"/><path d="M39.500 17.200l1 0 .8 2.500 2.200-1.800 .7 .8-2.300 2.500 2.400 4.500-1.400 .6-2.400-3.800-3 4-1.300-.8 3-4.600-1.700-2.200 1.500-.400z" fill="#2b2420"/><circle cx="40" cy="18" r="1.100" fill="#f1f1f1"/><ellipse cx="25.800" cy="22.600" rx="2.900" ry="1.400" fill="#eef3f5"/><ellipse cx="25.800" cy="22.500" rx="1.800" ry=".8" fill="#5b6fb0"/><path d="M23 23.200h5.600l-.6 4.200h-4.400z" fill="#f0efe9"/><path d="M23.300 25.500h5l-.3 2h-4.400z" fill="#d9772e"/><rect x="0.5" y="0.5" width="51" height="28.4" fill="none" stroke="#c4c4c4" stroke-width="1"/></svg>
<svg style="left:249.1px;top:1031px" width="52" height="29.4" viewBox="0 0 52 29.4"><rect width="52" height="29.4" fill="#323232"/><rect x="1" y="1" width="27" height="27.400" fill="#22343c"/><path d="M28 1c-2 8-2 19 0 27.400h1V1z" fill="#2b3236"/><path d="M14 8c0-2 2.200-3.600 5-3.600s5 1.600 5 3.800c0 3-2 6-3 10.500h-3.600C16.600 14 14 11.500 14 8z" fill="#2f9b3a"/><path d="M15.200 8.500c0-1.800 1.800-3 4-3s4 1.300 4 3c0 2.600-1.700 5-2.600 8h-2.400c-1-3-3-5.400-3-8z" fill="#54c747"/><ellipse cx="19.400" cy="12.500" rx="2" ry="3.500" fill="#7fe06a" opacity=".8"/><g stroke="#5fd14a" stroke-width=".9"><path d="M7.500 9.400h4M26.500 9.400h3.500M11 12.600l2-1.600M26 11l2 1.500M12 3l1.500 1.500M16 1.500l.6 1.600M21 1.400l-.4 1.600M24.500 2.500l-1 1.500M12.500 14.600l1-1.200M25 14.600l-1-1"/></g><path d="M1 21c3-2 7-3.500 11-4 2 0 4 1.500 6 2 3 1 8 1 11 2.500-1 2.500-6 4.500-10 5.500l-9 1.400H1z" fill="#7b5a49"/><path d="M1 22c3-1 6-1 9 1l-4 5.400H1z" fill="#9a8377" opacity=".6"/><ellipse cx="18" cy="20" rx="1.300" ry="1.800" fill="#d8cbb8"/><circle cx="28.300" cy="4.300" r="2.900" fill="#fff"/><circle cx="28.300" cy="4.300" r="1" fill="#555"/><g fill="#2e7f72"><rect x="33" y="8" width="14" height="1.300"/><rect x="33" y="10.200" width="8.500" height="1.300"/></g><g fill="#7d7d7d"><rect x="33" y="13.400" width="13" height="1.200"/><rect x="33" y="15" width="4.500" height="1"/><rect x="32.500" y="17" width="10" height=".7" fill="#666"/><rect x="33" y="26.600" width="13" height="1.200"/></g><rect x="32.400" y="20.600" width="1.600" height="1.100" fill="#3bb3a5"/><rect x="35.200" y="19" width="4.400" height="4.600" fill="#dcdcdc"/><rect x="0.5" y="0.5" width="51" height="28.4" fill="none" stroke="#c4c4c4" stroke-width="1"/></svg>
<svg style="left:0px;top:0px" width="200" height="80" viewBox="0 0 200 80">
<g fill="none" stroke="#3f3f41" stroke-width="2.9">
<ellipse cx="45.15" cy="46.8" rx="10.7" ry="11.45"/>
<path d="M63.45 59.2V45a9.6 9.6 0 0 1 19.2 0V59.2"/>
<path d="M90.6 47.3H113.1M111.65 47.3A10.6 11.45 0 1 0 110.9 52.4"/>
<path d="M119.95 29.2V59.2"/>
<path d="M158.5 59.2V45a9.55 9.55 0 0 1 19.1 0V59.2"/>
</g>
<path d="M144 58.15H130.3a2.7 2.7 0 0 1 -2.4 -4L137.3 37.1a2.7 2.7 0 0 1 4.7 0L149 49.2" fill="none" stroke="#1e9bd7" stroke-width="3.1" stroke-linecap="round" stroke-linejoin="round"/>
<circle cx="148.6" cy="54.7" r="5.5" fill="#fdbd31" stroke="#fff" stroke-width="1.2"/>
</svg>
<div class="t" id="t0" style="left:329.5px;top:36.88px;font-size:15.5px;color:#5a5a5a;letter-spacing:0.101px;">Production CMS - CMS100167 (V24.1.0)</div>
<div class="t" id="t1" style="left:1381.5px;top:36.88px;font-size:15.5px;color:#555;letter-spacing:0.139px;">Monday 15:48:32 AEST</div>
<div class="t" id="t2" style="left:1615.9px;top:48.17px;font-size:7px;color:#fff;font-weight:700;transform:scaleX(1.15);transform-origin:0 0;">3</div>
<div class="t" id="t3" style="left:272.5px;top:118.38px;font-size:15.5px;color:#5b5646;letter-spacing:0.059px;">Channels have changed. Please go to the&nbsp;</div>
<div class="t" id="t4" style="left:567px;top:118.38px;font-size:15.5px;color:#4e4a3e;font-weight:700;letter-spacing:-0.313px;text-decoration:underline;text-underline-offset:2.5px;text-decoration-thickness:1.3px;">Manage Channels page</div>
<div class="t" id="t5" style="left:733px;top:118.38px;font-size:15.5px;color:#5b5646;letter-spacing:0.129px;">&nbsp;to see more details on required actions.</div>
<div class="t" id="t6" style="left:49.3px;top:144.88px;font-size:15.5px;color:#111;-webkit-text-stroke:0.35px #111;letter-spacing:0.035px;">Home</div>
<div class="t" id="t7" style="left:49.3px;top:191.88px;font-size:15.5px;color:#111;-webkit-text-stroke:0.35px #111;letter-spacing:-0.044px;">Media</div>
<div class="t" id="t8" style="left:49.3px;top:238.88px;font-size:15.5px;color:#111;-webkit-text-stroke:0.35px #111;letter-spacing:-0.042px;">Layouts</div>
<div class="t" id="t9" style="left:49.3px;top:285.88px;font-size:15.5px;color:#111;-webkit-text-stroke:0.35px #111;letter-spacing:-0.095px;">Playlists</div>
<div class="t" id="t10" style="left:49.3px;top:332.88px;font-size:15.5px;color:#111;-webkit-text-stroke:0.35px #111;letter-spacing:0.068px;">Schedules</div>
<div class="t" id="t11" style="left:49.3px;top:379.88px;font-size:15.5px;color:#1e9bd7;-webkit-text-stroke:0.35px #1e9bd7;letter-spacing:0.062px;">Channels</div>
<div class="t" id="t12" style="left:49.3px;top:426.88px;font-size:15.5px;color:#111;-webkit-text-stroke:0.35px #111;letter-spacing:0.183px;">Ad Hoc Content</div>
<div class="t" id="t13" style="left:49.3px;top:473.88px;font-size:15.5px;color:#111;-webkit-text-stroke:0.35px #111;letter-spacing:0.041px;">Player Manager</div>
<div class="t" id="t14" style="left:49.3px;top:520.88px;font-size:15.5px;color:#111;-webkit-text-stroke:0.35px #111;letter-spacing:0.277px;">Help</div>
<div class="t" id="t15" style="left:261.3px;top:175.97px;font-size:13.5px;color:#858585;-webkit-text-stroke:0.35px #858585;letter-spacing:0.146px;">Home</div>
<div class="t" id="t16" style="left:323px;top:175.97px;font-size:13.5px;color:#858585;-webkit-text-stroke:0.35px #858585;letter-spacing:0.029px;">Layouts</div>
<div class="t" id="t17" style="left:395.7px;top:175.97px;font-size:13.5px;color:#858585;-webkit-text-stroke:0.35px #858585;letter-spacing:0.020px;">Test - Student Life</div>
<div class="t" id="t18" style="left:530.6px;top:175.97px;font-size:13.5px;color:#333;letter-spacing:0.024px;">Zone: A - Files &amp; Folders</div>
<div class="t" id="t19" style="left:307.5px;top:224.33px;font-size:14.5px;color:#000;">A</div>
<div class="t" id="t20" style="left:612.8px;top:229.57px;font-size:13.5px;color:#555;letter-spacing:-0.114px;">Layout:</div>
<div class="t" id="t21" style="left:668.5px;top:229.57px;font-size:13.5px;color:#2c416c;-webkit-text-stroke:0.32px #2c416c;letter-spacing:0.020px;">Test - Student Life</div>
<div class="t" id="t22" style="left:622.4px;top:295.57px;font-size:13.5px;color:#555;letter-spacing:-0.126px;">Zone:</div>
<div class="t" id="t23" style="left:668.5px;top:295.57px;font-size:13.5px;color:#555;">A</div>
<div class="t" id="t24" style="left:689.8px;top:279.57px;font-size:13.5px;color:#555;letter-spacing:-0.005px;">Media:</div>
<div class="t" id="t25" style="left:736px;top:279.57px;font-size:13.5px;color:#222;letter-spacing:-0.003px;">Movie</div>
<div class="t" id="t26" style="left:774.5px;top:279.57px;font-size:13.5px;color:#555;">,</div>
<div class="t" id="t27" style="left:782.5px;top:279.57px;font-size:13.5px;color:#222;letter-spacing:-0.312px;">HTML</div>
<div class="t" id="t28" style="left:820.5px;top:279.57px;font-size:13.5px;color:#555;">,</div>
<div class="t" id="t29" style="left:828.5px;top:279.57px;font-size:13.5px;color:#222;letter-spacing:-0.006px;">Image</div>
<div class="t" id="t30" style="left:698.5px;top:310.04px;font-size:12px;color:#8a8a8a;letter-spacing:-0.138px;">Edit Zone Geometry</div>
<div class="t" id="t31" style="left:610.2px;top:362.57px;font-size:13.5px;color:#555;letter-spacing:0.046px;">Ad hoc:</div>
<div class="t" id="t32" style="left:668.5px;top:362.57px;font-size:13.5px;color:#555;letter-spacing:0.132px;">The Layout's Ad hoc Page will be created once Ad hoc items have been added to the Layout.</div>
<div class="t" id="t33" style="left:254.8px;top:432.69px;font-size:17.5px;color:#8a8a8a;-webkit-text-stroke:0.3px #8a8a8a;letter-spacing:-0.130px;">Playlist</div>
<div class="t" id="t34" style="left:333.5px;top:432.69px;font-size:17.5px;color:#1e9bd7;-webkit-text-stroke:0.35px #1e9bd7;letter-spacing:-0.094px;">Files &amp; Folders</div>
<div class="t" id="t35" style="left:473.6px;top:432.69px;font-size:17.5px;color:#8a8a8a;-webkit-text-stroke:0.3px #8a8a8a;letter-spacing:0.010px;">Upload Files</div>
<div class="t" id="t36" style="left:595.4px;top:432.69px;font-size:17.5px;color:#8a8a8a;-webkit-text-stroke:0.3px #8a8a8a;letter-spacing:-0.057px;">Specials</div>
<div class="t" id="t37" style="left:685.5px;top:432.69px;font-size:17.5px;color:#8a8a8a;-webkit-text-stroke:0.3px #8a8a8a;letter-spacing:0.025px;">Defaults</div>
<div class="t" id="t38" style="left:774.2px;top:432.69px;font-size:17.5px;color:#8a8a8a;-webkit-text-stroke:0.3px #8a8a8a;letter-spacing:-0.165px;">Permissions</div>
<div class="t" id="t39" style="left:249px;top:484.17px;font-size:13.5px;color:#333;letter-spacing:0.410px;">Drag and Drop files below to upload</div>
<div class="t" id="t40" style="left:249px;top:514.57px;font-size:13.5px;color:#666;letter-spacing:0.087px;">Folder: /HOME/</div>
<div class="t" id="t41" style="left:344px;top:514.57px;font-size:13.5px;color:#2c416c;-webkit-text-stroke:0.32px #2c416c;letter-spacing:0.044px;">media</div>
<div class="t" id="t42" style="left:381px;top:514.57px;font-size:13.5px;color:#666;">/</div>
<div class="t" id="t43" style="left:385.7px;top:514.57px;font-size:13.5px;color:#2c416c;-webkit-text-stroke:0.32px #2c416c;letter-spacing:0.054px;">Student Comms</div>
<div class="t" id="t44" style="left:483.2px;top:514.57px;font-size:13.5px;color:#666;letter-spacing:0.091px;">/Student Comms - Landscape/</div>
<div class="t" id="t45" style="left:1380.7px;top:515.08px;font-size:15.5px;color:#fff;-webkit-text-stroke:0.3px #fff;letter-spacing:0.079px;">Add Folder to Playlist</div>
<div class="t" id="t46" style="left:1580.7px;top:516.48px;font-size:15.5px;color:#1e9bd7;-webkit-text-stroke:0.3px #1e9bd7;letter-spacing:0.379px;">All Content</div>
<div class="t" id="t47" style="left:260.5px;top:575.89px;font-size:17.5px;color:#4a4a4a;-webkit-text-stroke:0.3px #4a4a4a;letter-spacing:-0.036px;">Filename</div>
<div class="t" id="t48" style="left:721.6px;top:575.89px;font-size:17.5px;color:#4a4a4a;-webkit-text-stroke:0.3px #4a4a4a;letter-spacing:-0.134px;">Used By</div>
<div class="t" id="t49" style="left:1165.9px;top:575.89px;font-size:17.5px;color:#4a4a4a;-webkit-text-stroke:0.3px #4a4a4a;letter-spacing:-0.262px;">Size</div>
<div class="t" id="t50" style="left:1262.2px;top:575.89px;font-size:17.5px;color:#4a4a4a;-webkit-text-stroke:0.3px #4a4a4a;letter-spacing:0.062px;">Type</div>
<div class="t" id="t51" style="left:1341.8px;top:575.89px;font-size:17.5px;color:#4a4a4a;-webkit-text-stroke:0.3px #4a4a4a;letter-spacing:-0.067px;">Date</div>
<div class="t" id="t52" style="left:1493.3px;top:575.89px;font-size:17.5px;color:#4a4a4a;-webkit-text-stroke:0.3px #4a4a4a;letter-spacing:0.058px;">Actions</div>
<div class="t" id="t53" style="left:283.3px;top:615.08px;font-size:15.5px;color:#2c416c;-webkit-text-stroke:0.32px #2c416c;letter-spacing:0.069px;">(up to parent folder)</div>
<div class="t" id="t54" style="left:1155px;top:618.57px;font-size:13.5px;color:#555;">-</div>
<div class="t" id="t55" style="left:1251px;top:618.07px;font-size:13.5px;color:#333;letter-spacing:0.289px;">Folder</div>
<div class="t" id="t56" style="left:1331px;top:618.57px;font-size:13.5px;color:#555;">-</div>
<div class="t" id="t57" style="left:303.5px;top:665.18px;font-size:15.5px;color:#2c416c;-webkit-text-stroke:0.32px #2c416c;letter-spacing:0.075px;">Building LC Burwood</div>
<div class="t" id="t58" style="left:303.5px;top:727.18px;font-size:15.5px;color:#2c416c;-webkit-text-stroke:0.32px #2c416c;letter-spacing:0.031px;">Generic</div>
<div class="t" id="t59" style="left:1155px;top:668.57px;font-size:13.5px;color:#555;">-</div>
<div class="t" id="t60" style="left:1251px;top:668.07px;font-size:13.5px;color:#333;letter-spacing:0.289px;">Folder</div>
<div class="t" id="t61" style="left:1155px;top:730.57px;font-size:13.5px;color:#555;">-</div>
<div class="t" id="t62" style="left:1251px;top:730.07px;font-size:13.5px;color:#333;letter-spacing:0.289px;">Folder</div>
<div class="t" id="t63" style="left:1330.8px;top:657.38px;font-size:15.5px;color:#555;letter-spacing:0.590px;">2023-04-17</div>
<div class="t" id="t64" style="left:1330.8px;top:677.48px;font-size:15.5px;color:#555;letter-spacing:0.457px;">20:16:05</div>
<div class="t" id="t65" style="left:1330.8px;top:719.38px;font-size:15.5px;color:#555;letter-spacing:0.590px;">2023-04-17</div>
<div class="t" id="t66" style="left:1330.8px;top:739.48px;font-size:15.5px;color:#555;letter-spacing:0.457px;">20:14:38</div>
<div class="t" id="t67" style="left:309px;top:785.08px;font-size:15.5px;color:#4c5a70;letter-spacing:0.625px;">Asset 05 - Uncloud_Gyms_Fake Grape_16-</div>
<div class="t" id="t68" style="left:309px;top:796.88px;font-size:15.5px;color:#4c5a70;letter-spacing:0.866px;">9_15s.mp4</div>
<div class="t" id="t69" style="left:309px;top:846.78px;font-size:15.5px;color:#4c5a70;letter-spacing:0.620px;">Asset 06 - Uncloud - Vapes are too toxic for landfill</div>
<div class="t" id="t70" style="left:309px;top:858.68px;font-size:15.5px;color:#4c5a70;letter-spacing:0.740px;">but your mouth if fine apparently_16x9_15s.mp4</div>
<div class="t" id="t71" style="left:309px;top:914.88px;font-size:15.5px;color:#4c5a70;letter-spacing:0.546px;">BW_Beats_ Eats_Horizontal.jpg</div>
<div class="t" id="t72" style="left:309px;top:977.28px;font-size:15.5px;color:#4c5a70;letter-spacing:0.652px;">BW_Hug In A Mug_Horizontal.jpg</div>
<div class="t" id="t73" style="left:309px;top:1038.68px;font-size:15.5px;color:#4c5a70;letter-spacing:0.742px;">CN2025-L-Feb24.png</div>
<div class="t" id="t74" style="left:710px;top:791.97px;font-size:13.5px;color:#333;letter-spacing:0.276px;">Playlist&nbsp;</div>
<div class="t" id="t75" style="left:758.3px;top:791.97px;font-size:13.5px;color:#2c416c;-webkit-text-stroke:0.32px #2c416c;">A</div>
<div class="t" id="t76" style="left:771.7px;top:791.97px;font-size:13.5px;color:#333;letter-spacing:0.223px;">in Layout</div>
<div class="t" id="t77" style="left:833px;top:791.97px;font-size:13.5px;color:#2c416c;-webkit-text-stroke:0.32px #2c416c;letter-spacing:0.317px;">Student Communication - Landscape</div>
<div class="t" id="t78" style="left:1155.6px;top:791.18px;font-size:15.5px;color:#5a5a5a;letter-spacing:0.175px;">2.72MiB</div>
<div class="t" id="t79" style="left:1251px;top:792.17px;font-size:13.5px;color:#333;letter-spacing:0.523px;">video/mp4</div>
<div class="t" id="t80" style="left:1330.8px;top:792.17px;font-size:13.5px;color:#333;letter-spacing:0.728px;">2024-07-29 14:31:05</div>
<div class="t" id="t81" style="left:1155.6px;top:853.18px;font-size:15.5px;color:#5a5a5a;letter-spacing:0.175px;">3.95MiB</div>
<div class="t" id="t82" style="left:1251px;top:854.17px;font-size:13.5px;color:#333;letter-spacing:0.523px;">video/mp4</div>
<div class="t" id="t83" style="left:1330.8px;top:854.17px;font-size:13.5px;color:#333;letter-spacing:0.728px;">2024-08-07 14:44:26</div>
<div class="t" id="t84" style="left:1155.6px;top:915.18px;font-size:15.5px;color:#5a5a5a;letter-spacing:0.163px;">173.12KiB</div>
<div class="t" id="t85" style="left:1251px;top:916.17px;font-size:13.5px;color:#333;letter-spacing:0.465px;">image/jpeg</div>
<div class="t" id="t86" style="left:1330.8px;top:916.17px;font-size:13.5px;color:#333;letter-spacing:0.728px;">2024-07-29 12:38:04</div>
<div class="t" id="t87" style="left:1155.6px;top:977.18px;font-size:15.5px;color:#5a5a5a;letter-spacing:0.163px;">156.02KiB</div>
<div class="t" id="t88" style="left:1251px;top:978.17px;font-size:13.5px;color:#333;letter-spacing:0.465px;">image/jpeg</div>
<div class="t" id="t89" style="left:1330.8px;top:978.17px;font-size:13.5px;color:#333;letter-spacing:0.728px;">2024-07-29 12:38:16</div>
<div class="t" id="t90" style="left:1155.6px;top:1039.18px;font-size:15.5px;color:#5a5a5a;letter-spacing:0.175px;">1.66MiB</div>
<div class="t" id="t91" style="left:1251px;top:1040.17px;font-size:13.5px;color:#333;letter-spacing:0.439px;">image/png</div>
<div class="t" id="t92" style="left:1330.8px;top:1040.17px;font-size:13.5px;color:#333;letter-spacing:0.728px;">2024-01-15 13:32:05</div>
<div class="b" style="left:230px;top:615px;width:1001px;height:423px;border:3px solid #fe3c3c;filter:drop-shadow(0 3px 3px rgba(0,0,0,.5));z-index:20;"></div>
<div class="b" style="left:437.2px;top:438.9px;width:40px;height:40px;border-radius:50%;background:#fc4043;box-shadow:0 3px 6px rgba(0,0,0,.48);z-index:21;"></div>
<svg style="left:0;top:0;z-index:22" width="500" height="480" viewBox="0 0 500 480"><path fill="#fff" d="M460.17 448.81V469.91H456.83V453.67L452.26 457.31L451.67 455.08L458.7 448.81z"/></svg>
<div class="b" style="left:667.2px;top:517px;width:40px;height:40px;border-radius:50%;background:#fc4043;box-shadow:0 3px 6px rgba(0,0,0,.48);z-index:21;"></div>
<div class="t" style="left:667.2px;top:523.3px;width:40px;text-align:center;font-size:30px;color:#fff;-webkit-text-stroke:0.35px #fff;transform:scaleX(.94);z-index:22;">2</div>
<div class="b" style="left:1061.9px;top:700.9px;width:40px;height:40px;border-radius:50%;background:#fc4043;box-shadow:0 3px 6px rgba(0,0,0,.48);z-index:21;"></div>
<div class="t" style="left:1061.9px;top:707.1999999999999px;width:40px;text-align:center;font-size:30px;color:#fff;-webkit-text-stroke:0.35px #fff;transform:scaleX(.94);z-index:22;">3</div>
</body></html>
